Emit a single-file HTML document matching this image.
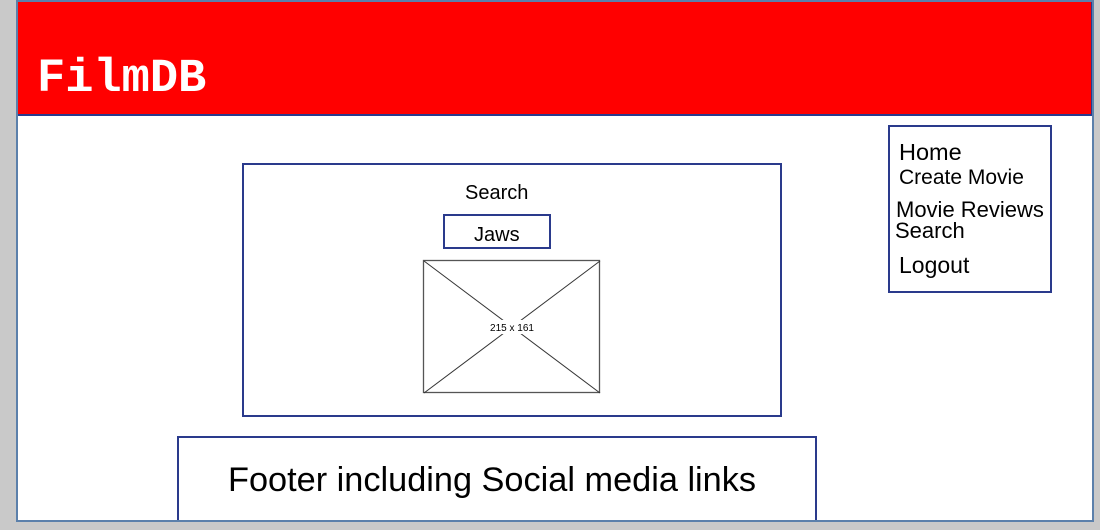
<!DOCTYPE html>
<html style="height:530px;overflow:hidden;"><head><style>
html,body{margin:0;}
body{width:1100px;height:530px;background:#c9c9c9;position:relative;overflow:hidden;font-family:"Liberation Sans",Arial,sans-serif;}
.a{position:absolute;box-sizing:border-box;}
.b{border:2px solid #2a3a8c;}
.t{position:absolute;white-space:nowrap;color:#000;}
</style></head><body>
<div class="a" style="left:16px;top:0;width:1078px;height:522px;background:#fff;border:2px solid #5b80ab;"></div>
<div class="a" style="left:18px;top:2px;width:1074px;height:114px;background:#ff0000;border-bottom:2px solid #2a3a8c;border-right:1px solid #2a3a8c;"></div>
<div class="t" style="left:37px;top:53px;font-family:'Courier New','Liberation Mono','Nimbus Mono PS',monospace;font-weight:bold;font-size:47px;color:#fff;line-height:54px;">FilmDB</div>

<div class="a b" style="left:242px;top:163px;width:540px;height:254px;"></div>
<div class="t" style="left:465px;top:182px;font-size:20px;line-height:22px;">Search</div>
<div class="a b" style="left:443px;top:214px;width:108px;height:35px;"></div>
<div class="t" style="left:474px;top:224px;font-size:20px;line-height:22px;">Jaws</div>
<svg class="a" style="left:422px;top:259px;" width="180" height="136">
<rect x="1.5" y="1.5" width="176" height="132" fill="none" stroke="#555" stroke-width="1.3"/>
<line x1="2" y1="2" x2="178" y2="134" stroke="#333" stroke-width="1"/>
<line x1="178" y1="2" x2="2" y2="134" stroke="#333" stroke-width="1"/>
<rect x="66" y="61" width="48" height="14" fill="#fff"/>
<text x="90" y="72" font-size="10" text-anchor="middle" font-family="Liberation Sans,sans-serif">215 x 161</text>
</svg>

<div class="a b" style="left:888px;top:125px;width:164px;height:168px;"></div>
<div class="t" style="left:899px;top:139px;font-size:23.5px;line-height:26px;">Home</div>
<div class="t" style="left:899px;top:166px;font-size:21px;line-height:23px;">Create Movie</div>
<div class="t" style="left:896px;top:198px;font-size:22px;line-height:23px;">Movie Reviews</div>
<div class="t" style="left:895px;top:219px;font-size:22px;line-height:23px;">Search</div>
<div class="t" style="left:899px;top:254px;font-size:23px;line-height:23px;">Logout</div>

<div class="a" style="left:177px;top:436px;width:640px;height:86px;border:2px solid #2a3a8c;border-bottom:none;"></div>
<div class="t" style="left:228px;top:460px;font-size:34.3px;line-height:40px;">Footer including Social media links</div>
<div class="a" style="left:16px;top:520px;width:1078px;height:2px;background:#5b80ab;"></div>
</body></html>
